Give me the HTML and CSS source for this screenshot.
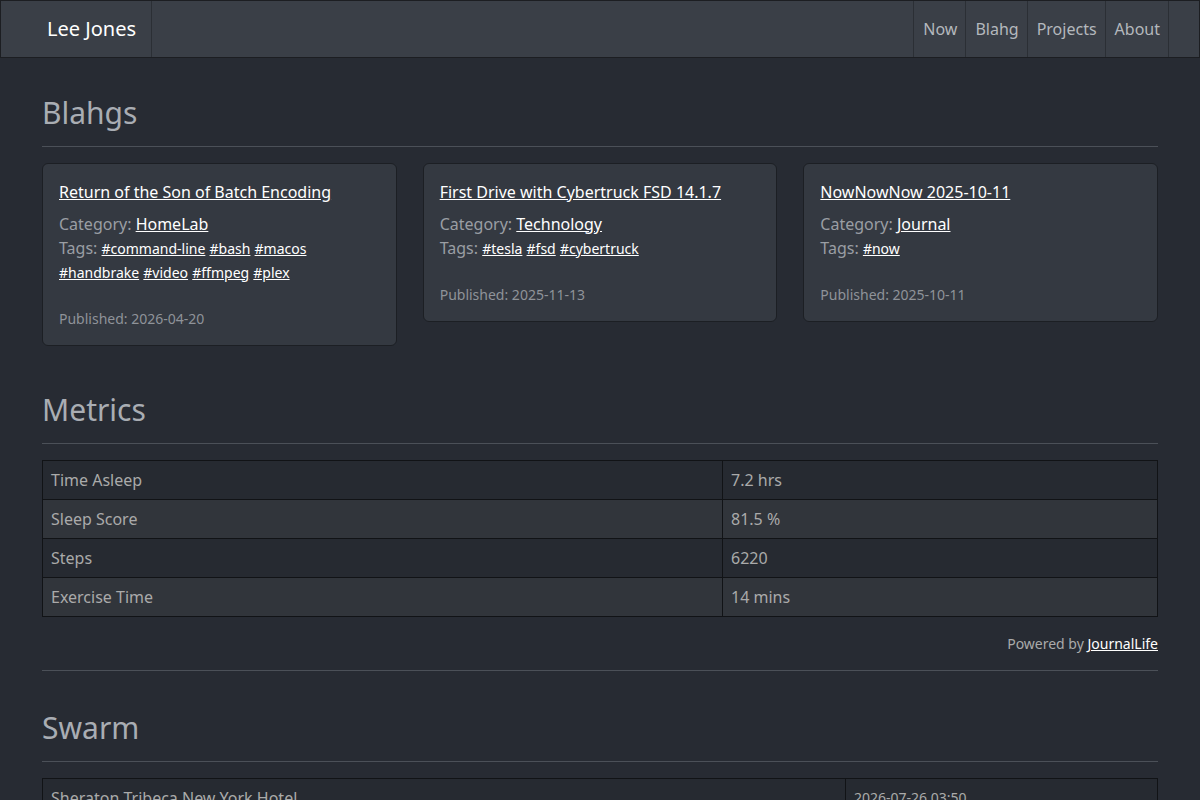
FILE: index.html
```html
<!DOCTYPE html>
<html lang="en">
<head>
  <meta charset="UTF-8" />
  <meta name="viewport" content="width=device-width, initial-scale=1.0"/>
  <title>Lee Jones</title>
  <link rel="stylesheet" href="styles.css">
</head>
<body>
  <!-- Навигация -->
  <nav class="navbar">
    <a class="brand" href="#">Lee Jones</a>
    <ul class="nav-links">
      <li><a href="#">Now</a></li>
      <li><a href="#">Blahg</a></li>
      <li><a href="#">Projects</a></li>
      <li><a href="#">About</a></li>
    </ul>
  </nav>

  <div class="container">
    <h2>Blahgs</h2>
    <hr>
    <div class="cards">
      <div class="card">
        <a class="card-title" href="#">Return of the Son of Batch Encoding</a>
        <p class="category">Category: <a href="#">HomeLab</a></p>
        <p class="tags">Tags: <a href="#">#command-line</a> <a href="#">#bash</a> <a href="#">#macos</a> <a href="#">#handbrake</a> <a href="#">#video</a> <a href="#">#ffmpeg</a> <a href="#">#plex</a></p>
        <p class="published">Published: 2026-04-20</p>
      </div>
      <div class="card">
        <a class="card-title" href="#">First Drive with Cybertruck FSD 14.1.7</a>
        <p class="category">Category: <a href="#">Technology</a></p>
        <p class="tags">Tags: <a href="#">#tesla</a> <a href="#">#fsd</a> <a href="#">#cybertruck</a></p>
        <p class="published">Published: 2025-11-13</p>
      </div>
      <div class="card">
        <a class="card-title" href="#">NowNowNow 2025-10-11</a>
        <p class="category">Category: <a href="#">Journal</a></p>
        <p class="tags">Tags: <a href="#">#now</a></p>
        <p class="published">Published: 2025-10-11</p>
      </div>
    </div>

    <h2>Metrics</h2>
    <hr>
    <table class="table metrics">
      <tr><td>Time Asleep</td><td>7.2 hrs</td></tr>
      <tr><td>Sleep Score</td><td>81.5 %</td></tr>
      <tr><td>Steps</td><td>6220</td></tr>
      <tr><td>Exercise Time</td><td>14 mins</td></tr>
    </table>
    <p class="powered">Powered by <a href="#">JournalLife</a></p>
    <hr>

    <h2>Swarm</h2>
    <hr>
    <table class="table swarm">
      <tr><td>Sheraton Tribeca New York Hotel</td><td class="date">2026-07-26 03:50</td></tr>
      <tr><td>Whole Foods Market</td><td class="date">2026-07-25 18:12</td></tr>
    </table>
  </div>
</body>
</html>
```
FILE: styles.css
```css
* { box-sizing: border-box; }
body {
  font-family: 'Noto Sans', 'Open Sans', sans-serif;
  font-size: 16px;
  line-height: 1.42857;
  margin: 0;
  background: #272b33;
  color: #aaaaaa;
}
a {
  color: #ffffff;
  text-decoration: underline;
}

/* навбар */
.navbar {
  display: flex;
  justify-content: space-between;
  height: 58px;
  background: #3a3f47;
  border: 1px solid #1c1e22;
  padding: 0 30px 0 0;
}
.brand {
  display: flex;
  align-items: center;
  padding: 0 15px 0 46px;
  font-size: 20px;
  color: #ffffff;
  text-decoration: none;
  border-right: 1px solid #2b2f35;
}
.nav-links {
  display: flex;
  list-style: none;
  margin: 0;
  padding: 0;
  border-right: 1px solid #2b2f35;
}
.nav-links li {
  display: flex;
  border-left: 1px solid #2b2f35;
}
.nav-links a {
  display: flex;
  align-items: center;
  padding: 0 8px 0 9px;
  font-size: 16px;
  color: #b4b8bd;
  text-decoration: none;
}

.container {
  padding: 0 42px;
}
h2 {
  font-size: 30px;
  font-weight: 400;
  color: #a9adb3;
  margin: 38px 0 0;
  line-height: 1.1;
}
hr {
  border: 0;
  border-top: 1px solid #4b5058;
  margin: 17px 0 16px;
}

/* карточки */
.cards {
  display: grid;
  grid-template-columns: repeat(3, 1fr);
  gap: 26px;
  align-items: start;
  margin-bottom: 47px;
}
.card {
  background: #343941;
  border: 1px solid #1c1f24;
  border-radius: 6px;
  padding: 17px 16px 16px;
}
.card p {
  margin: 0;
}
.card-title {
  display: block;
  font-size: 16px;
  margin-bottom: 9px;
}
.category {
  font-size: 16px;
  color: #9a9ea4;
}
.tags {
  font-size: 16px;
  line-height: 24px;
  color: #9a9ea4;
}
.tags a {
  font-size: 14px;
  line-height: 1;
}
.card .published {
  font-size: 14px;
  color: #8f9399;
  margin-top: 25px;
}

/* таблицы */
.table {
  width: 100%;
  border-collapse: collapse;
  border: 1px solid #111316;
}
.table td {
  padding: 8px;
  line-height: 22px;
  border: 1px solid #111316;
  color: #aaaaaa;
}
.table tr:nth-child(odd) td {
  background: #262a31;
}
.table tr:nth-child(even) td {
  background: #31353b;
}
.metrics td:first-child {
  width: 680px;
}
.swarm td.date {
  width: 312px;
  font-size: 14px;
}
.powered {
  text-align: right;
  font-size: 14px;
  margin: 17px 0 0;
}
.powered + hr {
  margin-top: 16px;
  margin-bottom: 0;
}
.powered + hr + h2 {
  margin-top: 40px;
}
```
